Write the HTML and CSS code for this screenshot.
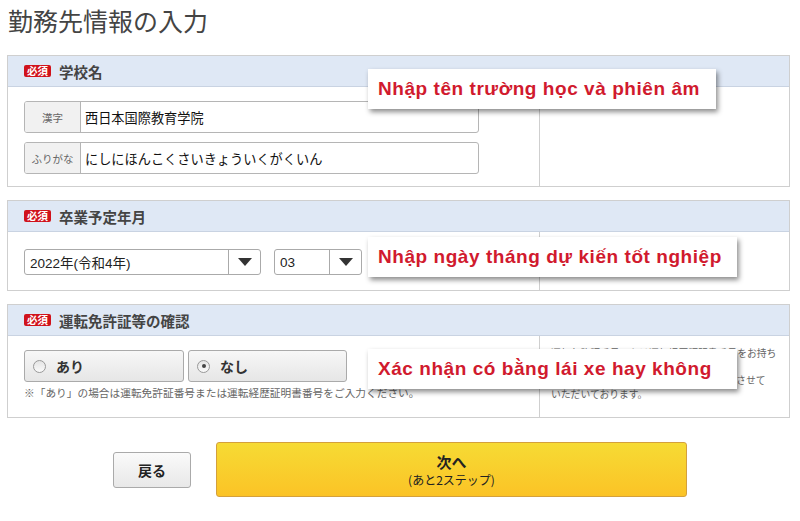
FILE: index.html
```html
<!DOCTYPE html>
<html lang="ja">
<head>
<meta charset="utf-8">
<title>勤務先情報の入力</title>
<link rel="stylesheet" href="styles.css">
</head>
<body>
<div class="page">
  <h1 class="title">勤務先情報の入力</h1>

  <section class="sec">
    <div class="sec-head"><span class="req">必須</span><span class="sec-title">学校名</span></div>
    <div class="sec-body sec-body-1">
      <div class="left">
        <div class="field"><span class="field-label">漢字</span><span class="field-input">西日本国際教育学院</span></div>
        <div class="field"><span class="field-label">ふりがな</span><span class="field-input">にしにほんこくさいきょういくがくいん</span></div>
      </div>
      <div class="right"></div>
    </div>
    <div class="tip tip-1">Nhập tên trường học và phiên âm</div>
  </section>

  <section class="sec">
    <div class="sec-head"><span class="req">必須</span><span class="sec-title">卒業予定年月</span></div>
    <div class="sec-body sec-body-2">
      <div class="left selects">
        <div class="select select-year"><span class="select-val">2022年(令和4年)</span><span class="select-arrow"><svg width="14" height="8" viewBox="0 0 14 8"><path d="M0 0H14L7 8Z" fill="#333"/></svg></span></div>
        <div class="select select-month"><span class="select-val">03</span><span class="select-arrow"><svg width="14" height="8" viewBox="0 0 14 8"><path d="M0 0H14L7 8Z" fill="#333"/></svg></span></div>
      </div>
      <div class="right"></div>
    </div>
    <div class="tip tip-2">Nhập ngày tháng dự kiến tốt nghiệp</div>
  </section>

  <section class="sec">
    <div class="sec-head"><span class="req">必須</span><span class="sec-title">運転免許証等の確認</span></div>
    <div class="sec-body sec-body-3">
      <div class="left">
        <div class="radios">
          <label class="radio"><span class="radio-dot"></span>あり</label>
          <label class="radio"><span class="radio-dot radio-on"></span>なし</label>
        </div>
        <p class="note">※「あり」の場合は運転免許証番号または運転経歴証明書番号をご入力ください。</p>
      </div>
      <div class="right right-text">
        <span class="rt-line">運転免許証番号または運転経歴証明書番号をお持ち</span>
        <span class="rt-line">でない方は、ご登録をお断りして</span>
        <span class="rt-line">おります。ご本人様確認のためのご連絡をさせて</span>
        <span class="rt-line">いただいております。</span>
      </div>
    </div>
    <div class="tip tip-3">Xác nhận có bằng lái xe hay không</div>
  </section>

  <div class="actions">
    <button class="btn-back">戻る</button>
    <button class="btn-next"><span class="next-main">次へ</span><span class="next-sub">(あと2ステップ)</span></button>
  </div>
</div>
</body>
</html>
```

FILE: styles.css
```css
* { box-sizing: border-box; }
html, body { margin: 0; padding: 0; background: #fff; }
body {
  font-family: "Liberation Sans", "Noto Sans CJK JP", sans-serif;
  color: #333;
}
.page { padding: 0 10px 0 7px; width: 800px; }

.title {
  margin: 0;
  height: 55px;
  padding: 5px 0 0 1px;
  font-family: "Noto Sans CJK JP", sans-serif;
  font-weight: 400;
  font-size: 25px;
  line-height: 30px;
  color: #444;
}

.sec {
  position: relative;
  border: 1px solid #cfcfcf;
  margin-bottom: 13px;
}
.sec-head {
  height: 31px;
  background: #dfe8f5;
  border-bottom: 1px solid #c9d3e2;
  display: flex;
  align-items: center;
  padding-left: 16px;
}
.req {
  background: #d0121b;
  color: #fff;
  font-family: "Noto Sans CJK JP", serif;
  font-weight: 700;
  font-size: 10.5px;
  line-height: 12px;
  padding: 0 3px;
  border-radius: 2px;
  margin-right: 8px;
}
.sec-title {
  font-family: "Noto Sans CJK JP", sans-serif;
  font-weight: 700;
  font-size: 14.5px;
  color: #444;
}

.sec-body {
  display: grid;
  grid-template-columns: 531px 1fr;
}
.left { padding: 0 16px; }
.right { border-left: 1px solid #cfcfcf; }

.sec-body-1 .left { padding-top: 14px; padding-bottom: 12px; }
.field {
  display: flex;
  width: 455px;
  height: 32px;
  border: 1px solid #b5b5b5;
  border-radius: 3px;
  overflow: hidden;
  margin-bottom: 9px;
}
.field:last-child { margin-bottom: 0; }
.field-label {
  width: 56px;
  flex: none;
  background: #f1f1f1;
  border-right: 1px solid #b5b5b5;
  display: flex;
  align-items: center;
  justify-content: center;
  font-family: "Noto Sans CJK JP", sans-serif;
  font-size: 10.5px;
  color: #666;
}
.field-input {
  display: flex;
  align-items: center;
  padding-left: 4px;
  font-family: "Noto Sans CJK JP", sans-serif;
  font-size: 13.2px;
  color: #111;
  background: #fff;
}

.sec-body-2 .left { padding-top: 17px; padding-bottom: 15px; }
.selects { display: flex; gap: 13px; }
.select {
  display: flex;
  height: 26px;
  border: 1px solid #aaa;
  border-radius: 3px;
  overflow: hidden;
  background: #fff;
}
.select-year { width: 237px; }
.select-month { width: 88px; }
.select-val {
  flex: 1;
  display: flex;
  align-items: center;
  padding-left: 5px;
  font-size: 13.5px;
  color: #222;
}
.select-arrow {
  width: 32px;
  flex: none;
  border-left: 1px solid #aaa;
  display: flex;
  align-items: center;
  justify-content: center;
}

.sec-body-3 .left { padding-top: 14px; padding-bottom: 17px; }
.radios { display: flex; gap: 4px; }
.radio {
  display: flex;
  align-items: center;
  width: 159px;
  height: 32px;
  border: 1px solid #aaa;
  border-radius: 3px;
  background: linear-gradient(#f7f7f7, #e6e6e6);
  padding-left: 8px;
  font-family: "Noto Sans CJK JP", sans-serif;
  font-weight: 700;
  font-size: 14px;
  color: #333;
}
.radio:first-child { width: 160px; }
.radio-dot {
  width: 13px;
  height: 13px;
  border-radius: 50%;
  border: 1px solid #999;
  background: linear-gradient(#e4e4e4, #fafafa);
  margin-right: 10px;
  position: relative;
}
.radio-on::after {
  content: "";
  position: absolute;
  left: 3.5px;
  top: 3.5px;
  width: 4px;
  height: 4px;
  border-radius: 50%;
  background: #444;
}
.note {
  margin: 4px 0 0 0;
  font-family: "Noto Sans CJK JP", sans-serif;
  font-size: 10.7px;
  line-height: 14px;
  color: #666;
  white-space: nowrap;
}
.right-text {
  padding: 11px 8px 0 11px;
  font-family: "Noto Sans CJK JP", sans-serif;
  font-size: 9.8px;
  line-height: 13.7px;
  color: #666;
}
.rt-line { display: block; white-space: nowrap; }

.tip {
  position: absolute;
  left: 360px;
  height: 40px;
  background: #fff;
  box-shadow: 2px 3px 5px rgba(0, 0, 0, 0.45);
  display: flex;
  align-items: center;
  padding-left: 10px;
  font-family: "Liberation Sans", sans-serif;
  font-weight: 700;
  font-size: 19px;
  letter-spacing: 0.55px;
  color: #d11a2e;
  white-space: nowrap;
}
.tip-1 { top: 13px; width: 348px; }
.tip-2 { top: 36px; width: 369px; }
.tip-3 { top: 44px; width: 369px; }

.actions {
  display: flex;
  align-items: center;
  justify-content: center;
  gap: 25px;
  margin-top: 24px;
  padding-left: 3px;
}
.btn-back {
  width: 78px;
  height: 36px;
  border: 1px solid #aaa;
  border-radius: 3px;
  background: linear-gradient(#fafafa, #e8e8e8);
  font-family: "Noto Sans CJK JP", sans-serif;
  font-weight: 700;
  font-size: 14px;
  color: #222;
  padding: 0;
}
.btn-next {
  width: 471px;
  height: 55px;
  border: 1px solid #d4a03c;
  border-radius: 3px;
  background: linear-gradient(#f6db34, #fbc326);
  display: flex;
  flex-direction: column;
  align-items: center;
  justify-content: center;
  padding: 0;
  font-family: "Noto Sans CJK JP", sans-serif;
  color: #222;
}
.next-main { font-weight: 700; font-size: 15px; line-height: 19px; }
.next-sub { font-size: 12px; line-height: 17px; }
```
